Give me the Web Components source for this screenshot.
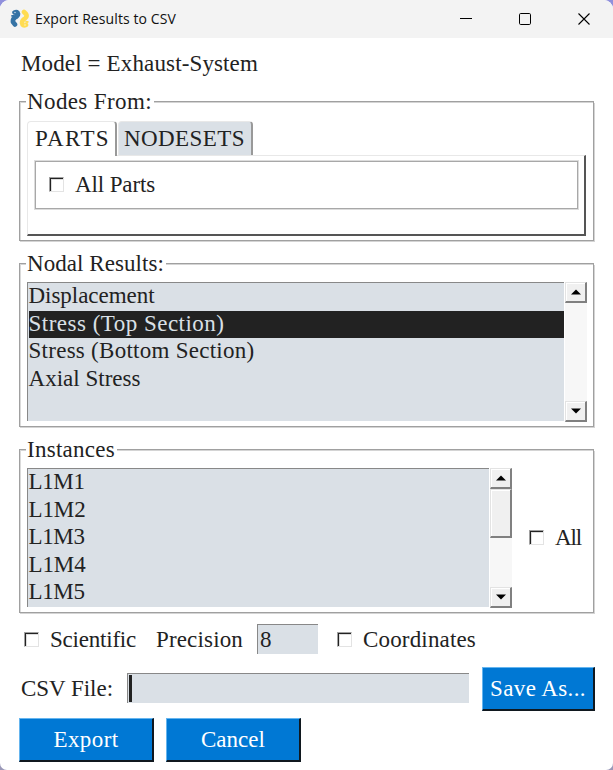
<!DOCTYPE html>
<html lang="en"><head><meta charset="utf-8"><title>Export Results to CSV</title>
<style>
html,body{margin:0;height:770px;overflow:hidden}
body{background:linear-gradient(#9090dc,#9a98b8);font-family:"Liberation Serif",serif;font-size:23px;color:#222}
.row{display:flex;align-items:flex-start}
</style></head><body>
<app-window>
  <title-bar slot="title"></title-bar>
  <tk-text w="237" style="margin:12px 0 0 21px">Model = Exhaust-System</tk-text>
  <tk-frame label="Nodes From:" lw="125" style="margin-top:10px;height:153px">
    <tk-tabs></tk-tabs>
  </tk-frame>
  <tk-frame label="Nodal Results:" lw="137" style="margin-top:9px;height:177px">
    <div class="row" style="padding:4px 0 0 8px">
      <tk-list style="width:537px" selected="1" items="Displacement:126,Stress (Top Section):196,Stress (Bottom Section):226,Axial Stress:112"></tk-list>
      <tk-scroll></tk-scroll>
    </div>
  </tk-frame>
  <tk-frame label="Instances" lw="88" style="margin-top:9px;height:177px">
    <div class="row" style="padding:4px 0 0 8px">
      <tk-list style="width:462px" items="L1M1:56,L1M2:57,L1M3:56,L1M4:57,L1M5:56"></tk-list>
      <tk-scroll thumb></tk-scroll>
      <tk-check w="26" style="margin:56px 0 0 17px">All</tk-check>
    </div>
  </tk-frame>
  <div class="row" style="margin:11px 0 0 24px;height:30px">
    <tk-check w="86" style="margin-top:2px">Scientific</tk-check>
    <tk-text w="87" style="margin:2px 0 0 20px">Precision</tk-text>
    <tk-entry style="width:61px;margin-left:14px"><tk-text w="11">8</tk-text></tk-entry>
    <tk-check w="113" style="margin:2px 0 0 19px">Coordinates</tk-check>
  </div>
  <div class="row" style="margin:13px 0 0 21px;height:44px">
    <tk-text w="92" style="margin-top:8px">CSV File:</tk-text>
    <tk-entry caret style="width:342px;margin:6px 0 0 14px"></tk-entry>
    <tk-button w="96" style="width:113px;margin-left:13px">Save As...</tk-button>
  </div>
  <div class="row" style="margin:7px 0 0 19px;gap:12px">
    <tk-button w="65" style="width:135px">Export</tk-button>
    <tk-button w="64" style="width:135px">Cancel</tk-button>
  </div>
</app-window>
<script>
const define=(name,html,init)=>customElements.define(name,class extends HTMLElement{
  connectedCallback(){
    if(this.shadowRoot)return;
    const root=this.attachShadow({mode:'open'});
    root.innerHTML=typeof html==='function'?html(this):html;
    if(init)init(this,root);
  }
});
/* A line of text, tracked so that it fills the width given in "w". */
define('tk-text',`<style>:host{display:block;height:28px;line-height:28px;white-space:nowrap;flex:none;font-variant-ligatures:none}span{display:inline-block}</style><span><slot></slot></span>`,(el,root)=>{
  const w=+el.getAttribute('w'),s=root.querySelector('span'),n=el.textContent.length;
  el.style.width=w+'px';
  if(n>1)s.style.letterSpacing=(w-s.getBoundingClientRect().width)/n+'px';
});
define('app-window',`<style>:host{display:flex;flex-direction:column;box-sizing:border-box;width:613px;height:770px;background:#fff;border-radius:9px 9px 7px 7px;overflow:hidden}</style><slot name="title"></slot><slot></slot>`);
define('title-bar',`<style>
:host{display:flex;align-items:center;box-sizing:border-box;height:38px;flex:none;background:#f3f3f3;padding:0 22px 0 10px;font:14px/20px "Open Sans",sans-serif;color:#111}
.t{margin:-1px auto 0 5px;height:20px;line-height:20px}.c{width:14px;height:14px;margin-left:45px;flex:none}
</style>
<svg width="20" height="20" viewBox="0 0 20 20"><g fill="none" stroke-linecap="round" stroke-linejoin="round"><path d="M4.500 3.500Q7.500 2 8 5 8 7 5 8.500 2.500 10 3 13L5 15.500" stroke="#3673a5" stroke-width="4.600"/><path d="M2 6.800 4 7" stroke="#3673a5" stroke-width="1.800"/><path d="M14 3 16 5Q17.500 7.500 15 9.500 12 11 12 14 12.500 17.500 16 16" stroke="#ffdc52" stroke-width="4.600"/><path d="M16 12.800 17.800 13" stroke="#ffdc52" stroke-width="1.800"/></g><circle cx="5" cy="3.500" r=".7" fill="#dfe9f1"/><circle cx="15" cy="16" r=".7" fill="#fff9dc"/></svg>
<tk-text class="t" w="141">Export Results to CSV</tk-text>
<svg class="c" viewBox="0 0 14 14"><path d="M1 6.500H13" stroke="#000"/></svg>
<svg class="c" viewBox="0 0 14 14"><rect x="1.500" y="1.500" width="11" height="11" rx="1.200" fill="none" stroke="#000"/></svg>
<svg class="c" viewBox="0 0 14 14"><path d="M1.500 1.500 12.500 12.500M12.500 1.500 1.500 12.500" stroke="#000" stroke-width="1.100"/></svg>`);
define('tk-frame',el=>`<style>
:host{display:flex;flex-direction:column;box-sizing:border-box;width:576px;margin-left:19px;flex:none}
.head{display:flex;height:14px;flex:none}.head tk-text{margin-left:1px}
.pre,.line{box-sizing:border-box;border-top:1px solid #a0a0a0;box-shadow:inset 0 1px #d4d4d4;margin-top:13px;height:3px}
.pre{width:7px}.line{flex:1;margin:13px 1px 0 2px}
.body{flex:1;box-sizing:border-box;border:solid #a0a0a0;border-width:0 1px 1px;box-shadow:inset 1px 0 #dadada,1px 1px #d4d4d4;padding-top:14px;margin-right:1px}
.content{margin-left:-1px}
</style><div class="head"><i class="pre"></i><tk-text w="${el.getAttribute('lw')}">${el.getAttribute('label')}</tk-text><i class="line"></i></div><div class="body"><div class="content"><slot></slot></div></div>`);
define('tk-check',el=>`<style>
:host{display:flex;align-items:flex-start;gap:11px;flex:none}
i{box-sizing:border-box;width:15px;height:15px;margin-top:6px;border:1px solid;border-color:#a0a0a0 #e3e3e3 #e3e3e3 #a0a0a0;box-shadow:inset 1px 1px #222,inset 2px 2px #ddd;background:#fff}
</style><i></i><tk-text w="${el.getAttribute('w')}">${el.textContent}</tk-text>`);
define('tk-tabs',`<style>
:host{display:block;padding:5px 0 0 8px}
.tabs{display:flex;gap:1px;height:34px}
.tab{box-sizing:border-box;height:34px;border:1px solid #e8e8e8;border-right:2px solid #999;border-bottom:0;border-radius:4px 4px 0 0;background:#fff;padding:3px 0 0 7px}
.on{width:90px;height:35px}.off{width:135px;background:#dae0e6;padding-left:5px}
.page{box-sizing:border-box;width:559px;height:81px;border:1px solid #e8e8e8;border-right:2px solid #555;border-bottom:2px solid #555;padding:5px 0 0 7px}
.box{box-sizing:border-box;width:543px;height:48px;border:1px solid #a8a8a8;outline:1px solid #dcdcdc;padding:9px 0 0 13px}
</style><div class="tabs"><div class="tab on"><tk-text w="75">PARTS</tk-text></div><div class="tab off"><tk-text w="121">NODESETS</tk-text></div></div>
<div class="page"><div class="box"><tk-check w="80">All Parts</tk-check></div></div>`);
define('tk-list',el=>`<style>
:host{display:block;box-sizing:border-box;height:139px;background:#dae0e6;border-top:1px solid #888;border-left:1px solid #888;padding-left:.5px;flex:none}
div{height:27.5px}tk-text{line-height:26px;height:26px}.sel{background:#222;color:#dae0e6}
</style>${el.getAttribute('items').split(',').map((s,i)=>{const[t,w]=s.split(':');return`<div${i===+(el.getAttribute('selected')??-1)?' class="sel"':''}><tk-text w="${w}">${t}</tk-text></div>`}).join('')}`);
define('tk-scroll',el=>`<style>
:host{display:flex;flex-direction:column;width:22px;height:140px;margin-left:1px;background:#f7f7f7;flex:none}
.b{box-sizing:border-box;height:21px;background:#f0f0f0;border:1px solid #e3e3e3;border-right:2px solid #808080;border-bottom:2px solid #808080;box-shadow:inset 1px 1px #fff;display:flex;align-items:center;justify-content:center}
.thumb{height:49px}.last{margin-top:auto}
</style><div class="b"><svg width="10" height="6"><path d="M0 5.500 5 .5 10 5.500Z"/></svg></div>${el.hasAttribute('thumb')?'<div class="b thumb"></div>':''}<div class="b last"><svg width="10" height="6"><path d="M0 .5 5 5.500 10 .5Z"/></svg></div>`);
define('tk-entry',el=>`<style>
:host{display:flex;box-sizing:border-box;height:30px;background:#dae0e6;border-top:1px solid #888;border-left:1px solid #888;padding:1px 0 0 2px;flex:none}
i{width:3px;height:27px;margin-left:-1px;background:#222}
</style>${el.hasAttribute('caret')?'<i></i>':''}<slot></slot>`);
define('tk-button',el=>`<style>
:host{display:flex;justify-content:center;box-sizing:border-box;height:44px;padding-top:7px;background:#0078d4;color:#fff;border:1px solid #65b5ef;border-right:2px solid #10181f;border-bottom:2px solid #10181f;flex:none}
</style><tk-text w="${el.getAttribute('w')}">${el.textContent}</tk-text>`);
</script></body></html>
